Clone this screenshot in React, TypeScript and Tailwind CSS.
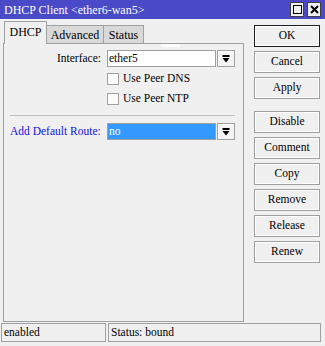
import React from 'react';

const FONT = { fontFamily: '"Liberation Serif", "Times New Roman", serif' };

// 下向き矢印（ドロップダウン用）
const DropArrow = () => (
  <svg width="8" height="8" viewBox="0 0 8 8">
    <rect x="0.5" y="0" width="7" height="2" fill="#000" />
    <polygon points="0.5,3 7.5,3 4,7.5" fill="#000" />
  </svg>
);

const DropButton = () => (
  <div className="w-[18px] h-[17px] border border-[#a0a0a0] bg-[#f4f4f4] flex items-center justify-center shadow-[inset_1px_1px_0_#ffffff]">
    <DropArrow />
  </div>
);

const Checkbox = ({ label }: { label: string }) => (
  <div className="flex items-center h-[12px] ml-[103px]">
    <div className="w-[12px] h-[12px] border border-[#a0a0a0] bg-[#fcfcfc]" />
    <span className="ml-[4px] leading-none">{label}</span>
  </div>
);

const SideButton = ({ label, primary }: { label: string; primary?: boolean }) => (
  <div
    className={
      'w-[66px] h-[22px] flex items-center justify-center bg-[#f0f0f0] shadow-[inset_1px_1px_0_#ffffff,inset_-1px_-1px_0_#ffffff] ' +
      (primary ? 'border border-[#1e1e1e]' : 'border border-[#a0a0a0]')
    }
  >
    {label}
  </div>
);

export default function App() {
  return (
    <div
      className="w-[325px] h-[346px] bg-[#f0f0f0] flex flex-col text-[11.5px] text-black overflow-hidden"
      style={FONT}
    >
      {/* タイトルバー */}
      <div className="h-[19px] bg-[#4a4ac8] flex items-center pl-[4px] text-white">
        <span className="leading-none text-[12px]">DHCP Client &lt;ether6-wan5&gt;</span>
        <div className="ml-auto mr-[4px] flex gap-[3px]">
          <div className="w-[14px] h-[15px] bg-[#f0f0f0] border border-[#404040] flex items-center justify-center">
            <div className="w-[9px] h-[9px] border-[1.5px] border-black" />
          </div>
          <div className="w-[14px] h-[15px] bg-[#f0f0f0] border border-[#404040] flex items-center justify-center">
            <svg width="9" height="9" viewBox="0 0 9 9">
              <path d="M1 1 L8 8 M8 1 L1 8" stroke="#000" strokeWidth="2" />
            </svg>
          </div>
        </div>
      </div>

      {/* 本体 */}
      <div className="flex h-[303px]">
        <div className="w-[241px] ml-[3px] flex flex-col pt-[2px]">
          {/* タブ */}
          <div className="flex items-end h-[22px] pl-[1px]">
            <div className="relative z-10 w-[43px] h-[23px] -mb-px border border-b-0 border-[#a0a0a0] bg-[#f0f0f0] flex items-center justify-center pb-[2px] text-[12px]">
              DHCP
            </div>
            <div className="w-[57px] h-[18px] border border-l-0 border-b-0 border-[#a0a0a0] bg-[#d9d9d9] flex items-center justify-center text-[12px]">
              Advanced
            </div>
            <div className="w-[40px] h-[18px] border border-l-0 border-b-0 border-[#a0a0a0] bg-[#d9d9d9] flex items-center justify-center text-[12px]">
              Status
            </div>
          </div>

          {/* パネル */}
          <div className="flex-1 border border-[#a0a0a0] flex flex-col">
            <div className="h-[3px] w-[18px] bg-white ml-[158px]" />

            <div className="flex items-center mt-[3px]">
              <div className="w-[97px] text-right leading-none">Interface:</div>
              <div className="ml-[6px] w-[109px] h-[17px] border border-[#a0a0a0] bg-white flex items-center pl-[1px] leading-none">
                ether5
              </div>
              <div className="ml-[1px]">
                <DropButton />
              </div>
            </div>

            <div className="mt-[6px]">
              <Checkbox label="Use Peer DNS" />
            </div>
            <div className="mt-[8px]">
              <Checkbox label="Use Peer NTP" />
            </div>

            <div className="mt-[10px] ml-[6px] w-[225px] h-px bg-[#c0c0c0]" />

            <div className="flex items-center mt-[7px]">
              <div className="w-[97px] pl-[6px] leading-none text-[#1010e6] whitespace-nowrap">Add Default Route:</div>
              <div className="ml-[6px] w-[109px] h-[17px] border border-[#a0a0a0] bg-[#3399ff] text-white flex items-center pl-[1px] leading-none">
                no
              </div>
              <div className="ml-[1px]">
                <DropButton />
              </div>
            </div>
          </div>
        </div>

        {/* 右側ボタン */}
        <div className="ml-[10px] pt-[6px] flex flex-col gap-[4px]">
          <SideButton label="OK" primary />
          <SideButton label="Cancel" />
          <SideButton label="Apply" />
          <div className="h-[4px]" />
          <SideButton label="Disable" />
          <SideButton label="Comment" />
          <SideButton label="Copy" />
          <SideButton label="Remove" />
          <SideButton label="Release" />
          <SideButton label="Renew" />
        </div>
      </div>

      {/* ステータスバー */}
      <div className="flex mt-[1px] ml-[1px] gap-[2px] h-[19px]">
        <div className="w-[105px] border border-[#a0a0a0] flex items-center pl-[2px] leading-none">enabled</div>
        <div className="w-[213px] border border-[#a0a0a0] flex items-center pl-[2px] leading-none">Status: bound</div>
      </div>
    </div>
  );
}
